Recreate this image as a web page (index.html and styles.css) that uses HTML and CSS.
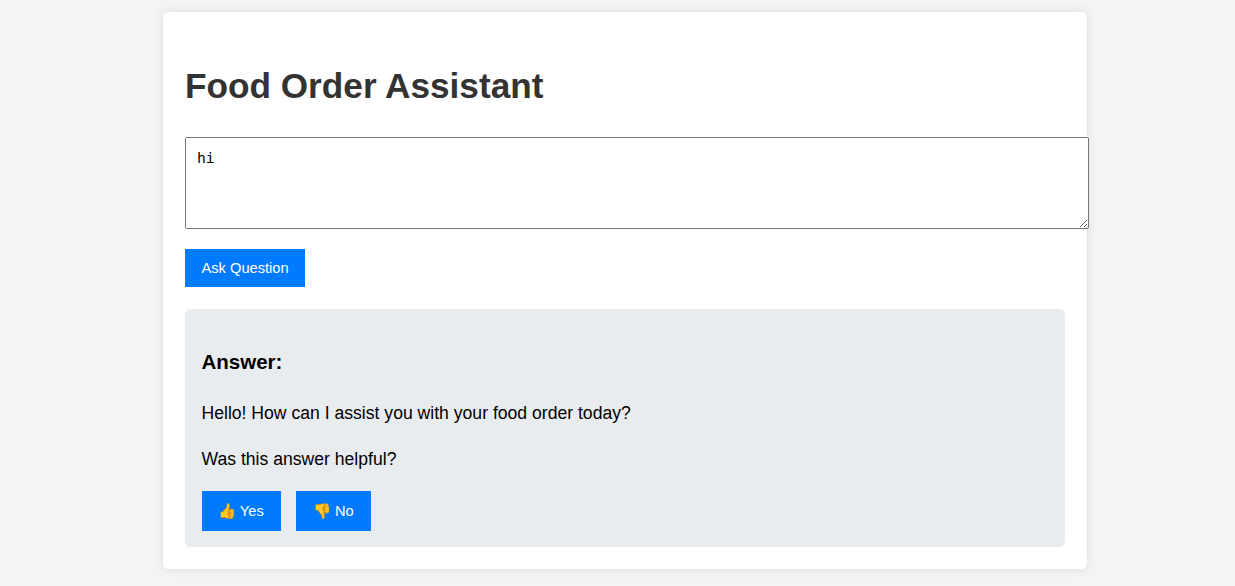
FILE: index.html
```html
<!DOCTYPE html>
<html lang="en">
<head>
<meta charset="utf-8">
<title>Food Order Assistant</title>
<link rel="stylesheet" href="styles.css">
</head>
<body>
<main class="container">
  <h1 class="title">Food Order Assistant</h1>
  <textarea class="question">hi</textarea>
  <button class="btn">Ask Question</button>
  <section class="answer">
    <h3 class="answer-title">Answer:</h3>
    <p class="text">Hello! How can I assist you with your food order today?</p>
    <p class="text">Was this answer helpful?</p>
    <div class="feedback">
      <button class="btn btn-vote">👍 Yes</button>
      <button class="btn btn-vote">👎 No</button>
    </div>
  </section>
</main>
</body>
</html>
```
FILE: styles.css
```css
body {
  box-sizing: border-box;
  min-height: 586px;
  margin: 0;
  padding: 12px 0 0 163px;
  background: #f4f4f4;
  font-family: Arial, "Liberation Sans", sans-serif;
  font-size: 17.6px;
  line-height: 28px;
}
.container {
  box-sizing: border-box;
  width: 924px;
  height: 557px;
  padding: 22px;
  background: #fff;
  border-radius: 5.5px;
  box-shadow: 0 0 11px rgba(0, 0, 0, 0.1);
}
.title {
  margin: 24px 0 23px;
  font-size: 35.2px;
  line-height: 56px;
  color: #333;
}
.question {
  display: block;
  box-sizing: border-box;
  width: 904px;
  height: 92px;
  margin: 0 0 20px;
  padding: 11px;
  font: 14.67px/17px "DejaVu Sans Mono", monospace;
}
.btn {
  display: block;
  height: 38px;
  padding: 0 16.5px;
  border: 0;
  background: #007bff;
  color: #fff;
  font: 14.67px "Liberation Sans", Arial, sans-serif;
}
.answer {
  box-sizing: border-box;
  height: 238px;
  margin-top: 22px;
  padding: 17px 16.5px;
  background: #e9ecef;
  border-radius: 5.5px;
}
.answer-title {
  margin: 19px 0 21px;
  font-size: 20.5px;
  line-height: 33px;
}
.text { margin: 0 0 18px; }
.feedback { display: flex; gap: 15.4px; }
.btn-vote {
  width: 79px;
  height: 40px;
  padding: 0 0 0 16.5px;
  text-align: left;
}
.btn-vote + .btn-vote { width: 74.8px; padding-left: 17px; }
```
